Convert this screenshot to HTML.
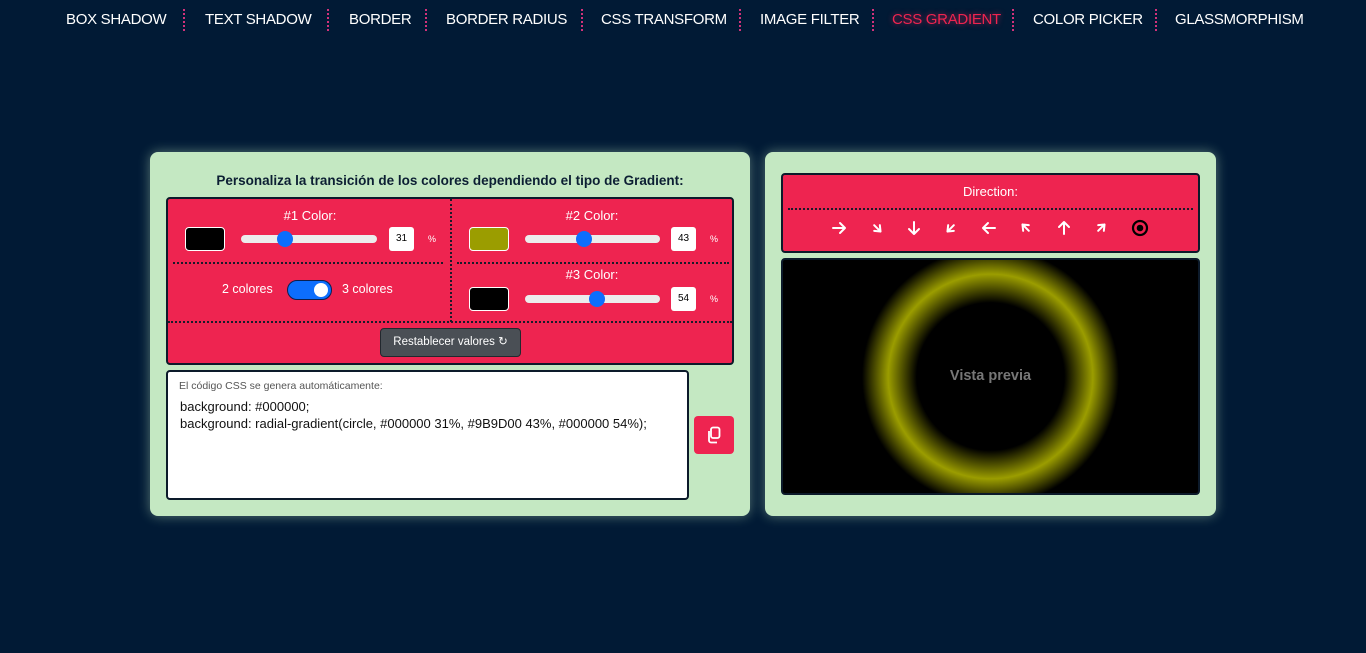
<!DOCTYPE html>
<html><head><meta charset="utf-8"><style>
*{box-sizing:border-box;margin:0;padding:0}
body{width:1366px;height:653px;background:#011a35;font-family:"Liberation Sans",sans-serif;position:relative;overflow:hidden}
.a{position:absolute}
.nav{top:11px;font-size:15px;color:#fff;white-space:nowrap;letter-spacing:-0.3px}
.sep{top:9px;height:22px;border-left:2px dotted #d2327a;width:0}
.card{background:#c4e8c2;border-radius:8px;box-shadow:0 0 12px rgba(196,232,194,.45)}
.red{background:#ee2450;border:2px solid #0c1a2a;border-radius:4px}
.lbl{color:#fff;font-size:13px;text-align:center}
.sw{width:40px;height:24px;border:1px solid #fff;border-radius:4px;background:#000}
.tr{height:8px;background:#ececec;border-radius:4px}
.th{width:16px;height:16px;border-radius:50%;background:#0d6efd}
.num{width:25px;height:24px;background:#fff;border-radius:3px;font-size:10px;text-align:center;line-height:24px;color:#000}
.pc{color:#fff;font-size:9px}
.dh{border-top:2px dotted #1a1a2a;height:0}
</style></head><body>
<div class="a nav" style="left:66px">BOX SHADOW</div><div class="a sep" style="left:183px"></div>
<div class="a nav" style="left:205px">TEXT SHADOW</div><div class="a sep" style="left:327px"></div>
<div class="a nav" style="left:349px">BORDER</div><div class="a sep" style="left:425px"></div>
<div class="a nav" style="left:446px">BORDER RADIUS</div><div class="a sep" style="left:581px"></div>
<div class="a nav" style="left:601px">CSS TRANSFORM</div><div class="a sep" style="left:739px"></div>
<div class="a nav" style="left:760px">IMAGE FILTER</div><div class="a sep" style="left:872px"></div>
<div class="a nav" style="left:892px;color:#ee2450;text-shadow:0 0 6px rgba(238,36,80,.7)">CSS GRADIENT</div><div class="a sep" style="left:1012px"></div>
<div class="a nav" style="left:1033px">COLOR PICKER</div><div class="a sep" style="left:1155px"></div>
<div class="a nav" style="left:1175px">GLASSMORPHISM</div>

<div class="a card" style="left:150px;top:152px;width:600px;height:364px"></div>
<div class="a" style="left:150px;top:173px;width:600px;text-align:center;font-weight:bold;font-size:13.5px;color:#0c1f33">Personaliza la transición de los colores dependiendo el tipo de Gradient:</div>
<div class="a red" style="left:166px;top:197px;width:568px;height:168px"></div>
<div class="a" style="left:450px;top:199px;height:123px;border-left:2px dotted #1a1a2a"></div>
<div class="a dh" style="left:173px;top:262px;width:270px"></div>
<div class="a dh" style="left:457px;top:262px;width:272px"></div>
<div class="a dh" style="left:168px;top:321px;width:564px"></div>

<div class="a lbl" style="left:250px;top:208px;width:120px">#1 Color:</div>
<div class="a sw" style="left:185px;top:227px"></div>
<div class="a tr" style="left:241px;top:235px;width:136px"></div><div class="a th" style="left:277px;top:231px"></div>
<div class="a num" style="left:389px;top:227px">31</div><div class="a pc" style="left:428px;top:234px">%</div>

<div class="a lbl" style="left:532px;top:208px;width:120px">#2 Color:</div>
<div class="a sw" style="left:469px;top:227px;background:#9b9d00"></div>
<div class="a tr" style="left:525px;top:235px;width:135px"></div><div class="a th" style="left:576px;top:231px"></div>
<div class="a num" style="left:671px;top:227px">43</div><div class="a pc" style="left:710px;top:234px">%</div>

<div class="a lbl" style="left:532px;top:267px;width:120px">#3 Color:</div>
<div class="a sw" style="left:469px;top:287px"></div>
<div class="a tr" style="left:525px;top:295px;width:135px"></div><div class="a th" style="left:589px;top:291px"></div>
<div class="a num" style="left:671px;top:287px">54</div><div class="a pc" style="left:710px;top:294px">%</div>

<div class="a lbl" style="left:222px;top:282px;font-size:12.5px">2 colores</div>
<div class="a" style="left:287px;top:280px;width:45px;height:20px;border-radius:10px;background:#0d6efd;border:1px solid #0a2050"></div>
<div class="a" style="left:314px;top:283px;width:14px;height:14px;border-radius:50%;background:#fff"></div>
<div class="a lbl" style="left:342px;top:282px;font-size:12.5px">3 colores</div>

<div class="a" style="left:380px;top:328px;width:141px;height:29px;background:#4a4f55;border:1px solid #22282e;border-radius:4px;color:#fff;font-size:11.5px;line-height:27px;text-align:center">Restablecer valores ↻</div>

<div class="a" style="left:166px;top:370px;width:523px;height:130px;background:#fff;border:2px solid #0c1a2a;border-radius:4px"></div>
<div class="a" style="left:179px;top:380px;font-size:10.5px;color:#555">El código CSS se genera automáticamente:</div>
<div class="a" style="left:180px;top:398px;width:490px;font-size:13px;line-height:17px;color:#111">background: #000000;<br>background: radial-gradient(circle, #000000 31%, #9B9D00 43%, #000000 54%);</div>
<div class="a" style="left:694px;top:416px;width:40px;height:38px;background:#ee2450;border-radius:4px"></div>
<svg class="a" style="left:706px;top:426px" width="16" height="18" viewBox="0 0 16 18" fill="none" stroke="#fff" stroke-width="1.8"><rect x="5" y="1.5" width="8.5" height="10.5" rx="2"/><path d="M3 5v9.5a2 2 0 0 0 2 2h6"/></svg>

<div class="a card" style="left:765px;top:152px;width:451px;height:364px"></div>
<div class="a red" style="left:781px;top:173px;width:419px;height:80px"></div>
<div class="a lbl" style="left:781px;top:184px;width:419px">Direction:</div>
<div class="a dh" style="left:788px;top:208px;width:405px"></div>
<svg class="a" style="left:820px;top:216px" width="340" height="24" viewBox="0 0 340 24" fill="none" stroke="#fff" stroke-width="2" stroke-linecap="round" stroke-linejoin="round">
<g transform="translate(19,12)"><path d="M-6 0H6M1-5l5 5-5 5"/></g>
<g transform="translate(57,12) rotate(45)"><path d="M-4 0H5M0-4l5 4-5 4"/></g>
<g transform="translate(94,12) rotate(90)"><path d="M-6 0H6M1-5l5 5-5 5"/></g>
<g transform="translate(131,12) rotate(135)"><path d="M-4 0H5M0-4l5 4-5 4"/></g>
<g transform="translate(169,12) rotate(180)"><path d="M-6 0H6M1-5l5 5-5 5"/></g>
<g transform="translate(206,12) rotate(225)"><path d="M-4 0H5M0-4l5 4-5 4"/></g>
<g transform="translate(244,12) rotate(270)"><path d="M-6 0H6M1-5l5 5-5 5"/></g>
<g transform="translate(281,12) rotate(315)"><path d="M-4 0H5M0-4l5 4-5 4"/></g>
<circle cx="320" cy="12" r="7" stroke="#000" stroke-width="2.2"/><circle cx="320" cy="12" r="3.3" fill="#000" stroke="none"/>
</svg>
<div class="a" style="left:781px;top:258px;width:419px;height:237px;border:2px solid #0c1a2a;border-radius:4px;background:radial-gradient(circle,#000 31%,#9b9d00 43%,#000 54%)"></div>
<div class="a" style="left:781px;top:368px;width:419px;text-align:center;color:#777;font-size:14.5px;font-weight:bold">Vista previa</div>
</body></html>
